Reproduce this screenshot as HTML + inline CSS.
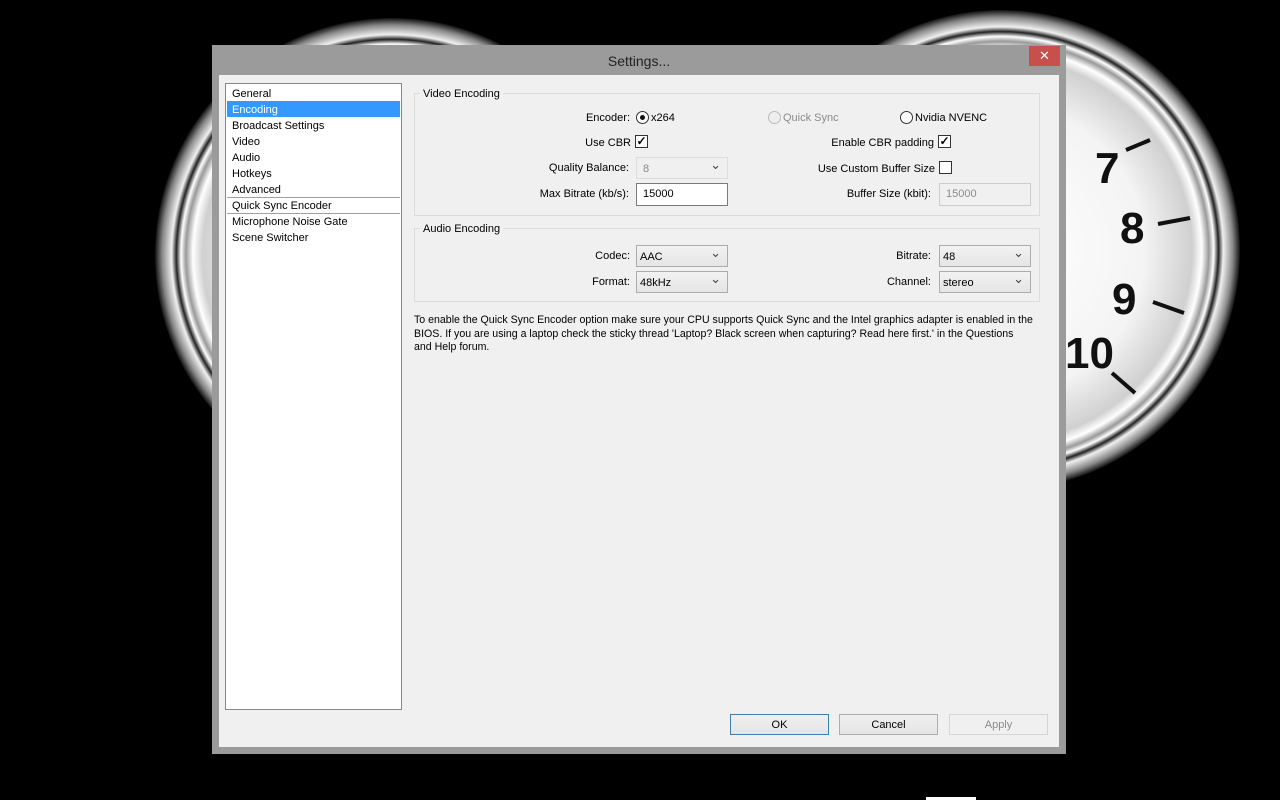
<!DOCTYPE html>
<html><head><meta charset="utf-8"><style>
*{margin:0;padding:0;box-sizing:border-box}
body{width:1280px;height:800px;background:#000;position:relative;overflow:hidden;font-family:"Liberation Sans",sans-serif;font-size:11px;color:#000}
.a{position:absolute;white-space:nowrap}
.r{text-align:right}
.gauge{position:absolute;border-radius:50%;background:radial-gradient(closest-side,#fff 0%,#f4f4f4 60%,#d0d0d0 80%,#fff 84%,#999 87%,#fff 89%,#222 91%,#f0f0f0 93%,#888 97%,#111 100%)}
.frame{position:absolute;left:212px;top:45px;width:854px;height:709px;background:#9b9b9b}
.client{position:absolute;left:219px;top:75px;width:840px;height:672px;background:#f0f0f0}
.list{position:absolute;left:225px;top:83px;width:177px;height:627px;background:#fff;border:1px solid #828790}
.li{position:absolute;left:6px;height:16px;line-height:18px;font-size:11px}
.grp{position:absolute;border:1px solid #dcdcdc}
.gt{position:absolute;background:#f0f0f0;padding:0 3px}
.box{position:absolute;background:#fff;border:1px solid #7a7a7a;height:23px;line-height:21px;padding-left:6px}
.dis{background:#f0f0f0;border-color:#ccc;color:#8a8a8a}
.sel{position:absolute;height:22px;border:1px solid #acacac;background:linear-gradient(#f2f2f2,#e5e5e5);line-height:22px;padding-left:3px}
.sel:after{content:"⌄";position:absolute;right:6px;top:-4px;font-size:13px;color:#444}
.cb{position:absolute;width:13px;height:13px;border:1px solid #333;background:#fff;font-size:12px;line-height:11px;text-align:center;font-weight:bold}
.rd{position:absolute;width:13px;height:13px;border:1px solid #333;border-radius:50%;background:#fff}
.btn{position:absolute;top:714px;width:99px;height:21px;border:1px solid #adadad;background:linear-gradient(#f0f0f0,#e5e5e5);text-align:center;line-height:21px}
</style></head><body>
<div class="gauge" style="left:155px;top:18px;width:474px;height:474px"></div>
<div class="gauge" style="left:762px;top:10px;width:478px;height:480px"></div>
<svg class="a" style="left:1040px;top:0" width="240" height="500">
<g font-family="Liberation Sans" font-weight="bold" font-size="44" fill="#111">
<text x="55" y="183">7</text><text x="80" y="243">8</text><text x="72" y="314">9</text><text x="25" y="368">10</text></g>
<g stroke="#111" stroke-width="4"><line x1="86" y1="150" x2="110" y2="140"/><line x1="118" y1="224" x2="150" y2="218"/><line x1="113" y1="302" x2="144" y2="313"/><line x1="72" y1="373" x2="95" y2="393"/></g>
</svg>
<div class="frame"></div>
<div class="a" style="left:1029px;top:46px;width:31px;height:20px;background:#c7504d;color:#fff;text-align:center;line-height:20px;font-size:13px">✕</div>
<div class="a" style="left:212px;top:53px;width:854px;text-align:center;font-size:14px;color:#222">Settings...</div>
<div class="client"></div>
<div class="list">
<div class="li" style="top:1px">General</div>
<div class="a" style="left:1px;top:17px;width:173px;height:16px;background:#3399ff"></div>
<div class="li" style="top:17px;color:#fff">Encoding</div>
<div class="li" style="top:33px">Broadcast Settings</div>
<div class="li" style="top:49px">Video</div>
<div class="li" style="top:65px">Audio</div>
<div class="li" style="top:81px">Hotkeys</div>
<div class="li" style="top:97px">Advanced</div>
<div class="a" style="left:1px;top:113px;width:173px;height:1px;background:#a0a0a0"></div>
<div class="li" style="top:113px">Quick Sync Encoder</div>
<div class="a" style="left:1px;top:129px;width:173px;height:1px;background:#a0a0a0"></div>
<div class="li" style="top:129px">Microphone Noise Gate</div>
<div class="li" style="top:145px">Scene Switcher</div>
</div>
<div class="grp" style="left:414px;top:93px;width:626px;height:123px"></div>
<div class="gt a" style="left:420px;top:88px">Video Encoding</div>
<div class="a r" style="left:530px;top:112px;width:100px">Encoder:</div>
<div class="rd" style="left:636px;top:111px"><div class="a" style="left:3px;top:3px;width:5px;height:5px;border-radius:50%;background:#111"></div></div>
<div class="a" style="left:651px;top:112px">x264</div>
<div class="rd" style="left:768px;top:111px;border-color:#bbb;background:#eee"></div>
<div class="a" style="left:783px;top:112px;color:#8a8a8a">Quick Sync</div>
<div class="rd" style="left:900px;top:111px"></div>
<div class="a" style="left:915px;top:112px">Nvidia NVENC</div>
<div class="a r" style="left:530px;top:137px;width:101px">Use CBR</div>
<div class="cb" style="left:635px;top:135px">✓</div>
<div class="a r" style="left:790px;top:137px;width:144px">Enable CBR padding</div>
<div class="cb" style="left:938px;top:135px">✓</div>
<div class="a r" style="left:500px;top:162px;width:129px">Quality Balance:</div>
<div class="sel dis" style="left:636px;top:157px;width:92px;border-color:#ddd;background:#f0f0f0">&nbsp;8</div>
<div class="a r" style="left:790px;top:163px;width:145px">Use Custom Buffer Size</div>
<div class="cb" style="left:939px;top:161px"></div>
<div class="a r" style="left:500px;top:188px;width:129px">Max Bitrate (kb/s):</div>
<div class="box" style="left:636px;top:183px;width:92px">15000</div>
<div class="a r" style="left:790px;top:188px;width:141px">Buffer Size (kbit):</div>
<div class="box dis" style="left:939px;top:183px;width:92px">15000</div>
<div class="grp" style="left:414px;top:228px;width:626px;height:74px"></div>
<div class="gt a" style="left:420px;top:223px">Audio Encoding</div>
<div class="a r" style="left:530px;top:250px;width:100px">Codec:</div>
<div class="sel" style="left:636px;top:245px;width:92px">AAC</div>
<div class="a r" style="left:830px;top:250px;width:101px">Bitrate:</div>
<div class="sel" style="left:939px;top:245px;width:92px">48</div>
<div class="a r" style="left:530px;top:276px;width:100px">Format:</div>
<div class="sel" style="left:636px;top:271px;width:92px">48kHz</div>
<div class="a r" style="left:830px;top:276px;width:101px">Channel:</div>
<div class="sel" style="left:939px;top:271px;width:92px">stereo</div>
<div class="a" style="left:414px;top:314px;line-height:13.5px;font-size:10.6px;letter-spacing:0">To enable the Quick Sync Encoder option make sure your CPU supports Quick Sync and the Intel graphics adapter is enabled in the<br>BIOS. If you are using a laptop check the sticky thread 'Laptop? Black screen when capturing? Read here first.' in the Questions<br>and Help forum.</div>
<div class="btn" style="left:730px;border-color:#3c7fb1">OK</div>
<div class="btn" style="left:839px">Cancel</div>
<div class="btn" style="left:949px;border-color:#d5d5d5;background:#f0f0f0;color:#8a8a8a">Apply</div>
<div class="a" style="left:926px;top:797px;width:50px;height:3px;background:#fff"></div>
</body></html>
